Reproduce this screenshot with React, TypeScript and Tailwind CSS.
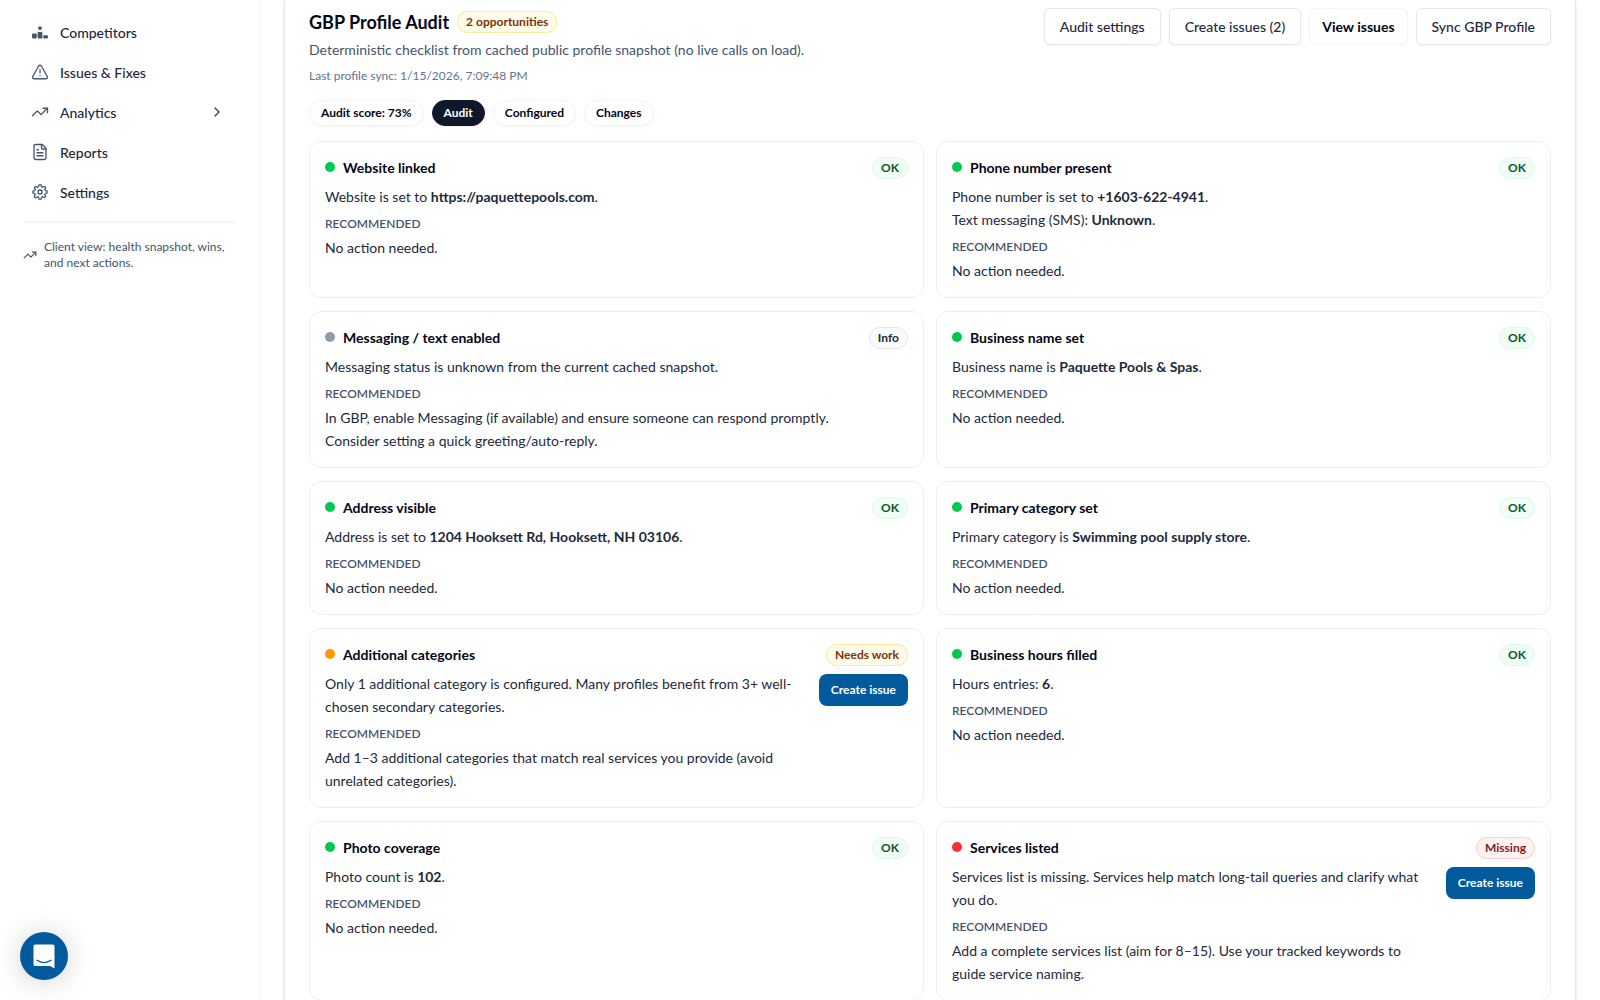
import type { ComponentType, ReactNode } from "react";
import { ChevronRight, FileText, TrendingUp, TriangleAlert } from "lucide-react";
import { FaRankingStar } from "react-icons/fa6";
import { FiSettings } from "react-icons/fi";

type Status = "ok" | "info" | "needs-work" | "missing";

interface Check {
  title: string;
  status: Status;
  detail: ReactNode;
  recommended: string;
}

const STATUS: Record<Status, { label: string; dot: string; badge: string }> = {
  ok: {
    label: "OK",
    dot: "bg-green-500",
    badge: "border-green-100 bg-green-50 text-green-900",
  },
  info: {
    label: "Info",
    dot: "bg-[#8f9aab]",
    badge: "border-gray-200 bg-slate-50 text-slate-800",
  },
  "needs-work": {
    label: "Needs work",
    dot: "bg-amber-500",
    badge: "border-amber-200/80 bg-amber-50 text-amber-900",
  },
  missing: {
    label: "Missing",
    dot: "bg-red-500",
    badge: "border-red-200/80 bg-red-50 text-red-900",
  },
};

const NO_ACTION = "No action needed.";

const CHECKS: Check[] = [
  {
    title: "Website linked",
    status: "ok",
    detail: <>Website is set to <Value>https://paquettepools.com</Value>.</>,
    recommended: NO_ACTION,
  },
  {
    title: "Phone number present",
    status: "ok",
    detail: (
      <>
        Phone number is set to <Value>+1603-622-4941</Value>.
        <br />
        Text messaging (SMS): <Value>Unknown</Value>.
      </>
    ),
    recommended: NO_ACTION,
  },
  {
    title: "Messaging / text enabled",
    status: "info",
    detail: "Messaging status is unknown from the current cached snapshot.",
    recommended:
      "In GBP, enable Messaging (if available) and ensure someone can respond promptly. Consider setting a quick greeting/auto-reply.",
  },
  {
    title: "Business name set",
    status: "ok",
    detail: <>Business name is <Value>Paquette Pools & Spas</Value>.</>,
    recommended: NO_ACTION,
  },
  {
    title: "Address visible",
    status: "ok",
    detail: <>Address is set to <Value>1204 Hooksett Rd, Hooksett, NH 03106</Value>.</>,
    recommended: NO_ACTION,
  },
  {
    title: "Primary category set",
    status: "ok",
    detail: <>Primary category is <Value>Swimming pool supply store</Value>.</>,
    recommended: NO_ACTION,
  },
  {
    title: "Additional categories",
    status: "needs-work",
    detail:
      "Only 1 additional category is configured. Many profiles benefit from 3+ well-chosen secondary categories.",
    recommended:
      "Add 1–3 additional categories that match real services you provide (avoid unrelated categories).",
  },
  {
    title: "Business hours filled",
    status: "ok",
    detail: <>Hours entries: <Value>6</Value>.</>,
    recommended: NO_ACTION,
  },
  {
    title: "Photo coverage",
    status: "ok",
    detail: <>Photo count is <Value>102</Value>.</>,
    recommended: NO_ACTION,
  },
  {
    title: "Services listed",
    status: "missing",
    detail:
      "Services list is missing. Services help match long-tail queries and clarify what you do.",
    recommended:
      "Add a complete services list (aim for 8–15). Use your tracked keywords to guide service naming.",
  },
];

// lucide glyphs carry padding inside their box, so they are drawn a little larger
const SOLID_ICON = "size-4 shrink-0";
const LINE_ICON = "-mx-px size-[18px] shrink-0 [stroke-width:1.75]";

const NAV: {
  label: string;
  icon: ComponentType<{ className?: string }>;
  iconClass: string;
  expandable?: boolean;
}[] = [
  { label: "Competitors", icon: FaRankingStar, iconClass: SOLID_ICON },
  { label: "Issues & Fixes", icon: TriangleAlert, iconClass: LINE_ICON },
  { label: "Analytics", icon: TrendingUp, iconClass: LINE_ICON, expandable: true },
  { label: "Reports", icon: FileText, iconClass: LINE_ICON },
  { label: "Settings", icon: FiSettings, iconClass: SOLID_ICON },
];

function Value({ children }: { children: ReactNode }) {
  return <strong className="font-bold">{children}</strong>;
}

function Sidebar() {
  return (
    <aside className="w-[260px] shrink-0 border-r border-gray-100 px-6 pt-3">
      <nav>
        {NAV.map(({ label, icon: Icon, iconClass, expandable }) => (
          <a
            key={label}
            href="#"
            className="flex h-10 items-center gap-3 px-2 text-[14px] font-medium text-slate-800"
          >
            <span className="flex text-slate-600">
              <Icon className={iconClass} />
            </span>
            <span className="flex-1">{label}</span>
            {expandable && <ChevronRight className="mr-0.5 size-4 text-slate-700" />}
          </a>
        ))}
      </nav>
      <div className="mt-[9px] flex items-center gap-2 border-t-2 border-gray-100 pt-4 text-[12px] leading-4 text-slate-600">
        <TrendingUp className="-mx-px size-[14px] shrink-0" />
        <p>Client view: health snapshot, wins, and next actions.</p>
      </div>
    </aside>
  );
}

function CheckCard({ check }: { check: Check }) {
  const s = STATUS[check.status];
  const actionable = check.status === "needs-work" || check.status === "missing";

  return (
    <article className="flex items-start justify-between gap-3 rounded-xl border border-gray-200/70 p-[15px]">
      <div className={actionable ? "max-w-[480px]" : "max-w-[530px]"}>
        <h3 className="flex h-5 items-center gap-2 text-[14px] font-bold text-slate-950">
          <span className={`size-[10px] shrink-0 rounded-full ${s.dot}`} />
          {check.title}
        </h3>
        <p className="mt-2 text-[14px] leading-[23px] text-slate-800">{check.detail}</p>
        <h4 className="mt-2 text-[12px] font-semibold leading-4 text-slate-600 uppercase">
          Recommended
        </h4>
        <p className="mt-1 text-[14px] leading-[23px] text-slate-800">{check.recommended}</p>
      </div>
      <div className="flex shrink-0 flex-col items-end gap-2">
        <span
          className={`flex h-[22px] items-center rounded-full border px-2 text-[12px] font-bold ${s.badge}`}
        >
          {s.label}
        </span>
        {actionable && (
          <button
            type="button"
            className="h-8 rounded-lg bg-[#005a9c] px-3 text-[12px] font-bold text-white"
          >
            Create issue
          </button>
        )}
      </div>
    </article>
  );
}

function HeaderButton({ children }: { children: ReactNode }) {
  return (
    <button
      type="button"
      className="h-[37px] rounded-md border border-gray-200 bg-white px-[15px] text-[14px] font-medium text-slate-800 shadow-xs"
    >
      {children}
    </button>
  );
}

const PILL = "flex h-[26px] items-center rounded-full border px-[11px] text-[12px] font-bold shadow-xs";

export default function App() {
  return (
    <div className="flex h-screen overflow-hidden bg-white font-['Lato',sans-serif]">
      <Sidebar />
      <main className="min-w-0 flex-1 px-6">
        <section className="border-x border-gray-200 px-6 pt-2 pb-6 shadow-sm">
          <header className="flex items-start justify-between gap-4">
            <div>
              <div className="flex h-7 items-center gap-2">
                <h2 className="text-[18px] font-bold text-slate-950">GBP Profile Audit</h2>
                <span className="flex h-[22px] items-center rounded-full border border-amber-200/80 bg-amber-50 px-2 text-[12px] font-bold text-amber-900">
                  2 opportunities
                </span>
              </div>
              <p className="mt-1 text-[14px] leading-5 text-slate-600">
                Deterministic checklist from cached public profile snapshot (no live calls on load).
              </p>
              <p className="mt-2 text-[12px] leading-4 text-slate-500">
                Last profile sync: 1/15/2026, 7:09:48 PM
              </p>
              <div className="mt-4 flex gap-2">
                <span className={`${PILL} border-gray-100 text-slate-950`}>Audit score: 73%</span>
                <button type="button" className={`${PILL} border-slate-900 bg-slate-900 text-white`}>
                  Audit
                </button>
                <button type="button" className={`${PILL} border-gray-100 text-slate-950`}>
                  Configured
                </button>
                <button type="button" className={`${PILL} border-gray-100 text-slate-950`}>
                  Changes
                </button>
              </div>
            </div>
            <div className="flex shrink-0 gap-2">
              <HeaderButton>Audit settings</HeaderButton>
              <HeaderButton>Create issues (2)</HeaderButton>
              <a
                href="#"
                className="flex h-[37px] items-center rounded-md border border-gray-100 px-3 text-[14px] font-bold text-slate-950"
              >
                View issues
              </a>
              <HeaderButton>Sync GBP Profile</HeaderButton>
            </div>
          </header>

          <div className="mt-[15px] grid grid-cols-2 gap-x-3 gap-y-[13px]">
            {CHECKS.map((c) => (
              <CheckCard key={c.title} check={c} />
            ))}
          </div>
        </section>
      </main>

      <button
        type="button"
        aria-label="Open chat"
        className="fixed bottom-5 left-5 flex size-12 items-center justify-center rounded-full bg-[#005a9c] shadow-[0_2px_28px_rgba(0,0,0,0.18)]"
      >
        <svg viewBox="0 0 24 26" className="h-[26px] w-6" fill="none">
          <path d="M4 1.500h16A2.300 2.300 0 0 1 22.500 4v21.500L18 23H4a2.300 2.300 0 0 1-2.500-2.500V4A2.300 2.300 0 0 1 4 1.500Z" fill="#fff" />
          <path d="M5 17.300c4 3 10 3 14 0" stroke="#005a9c" strokeWidth="1.300" strokeLinecap="round" />
        </svg>
      </button>
    </div>
  );
}
